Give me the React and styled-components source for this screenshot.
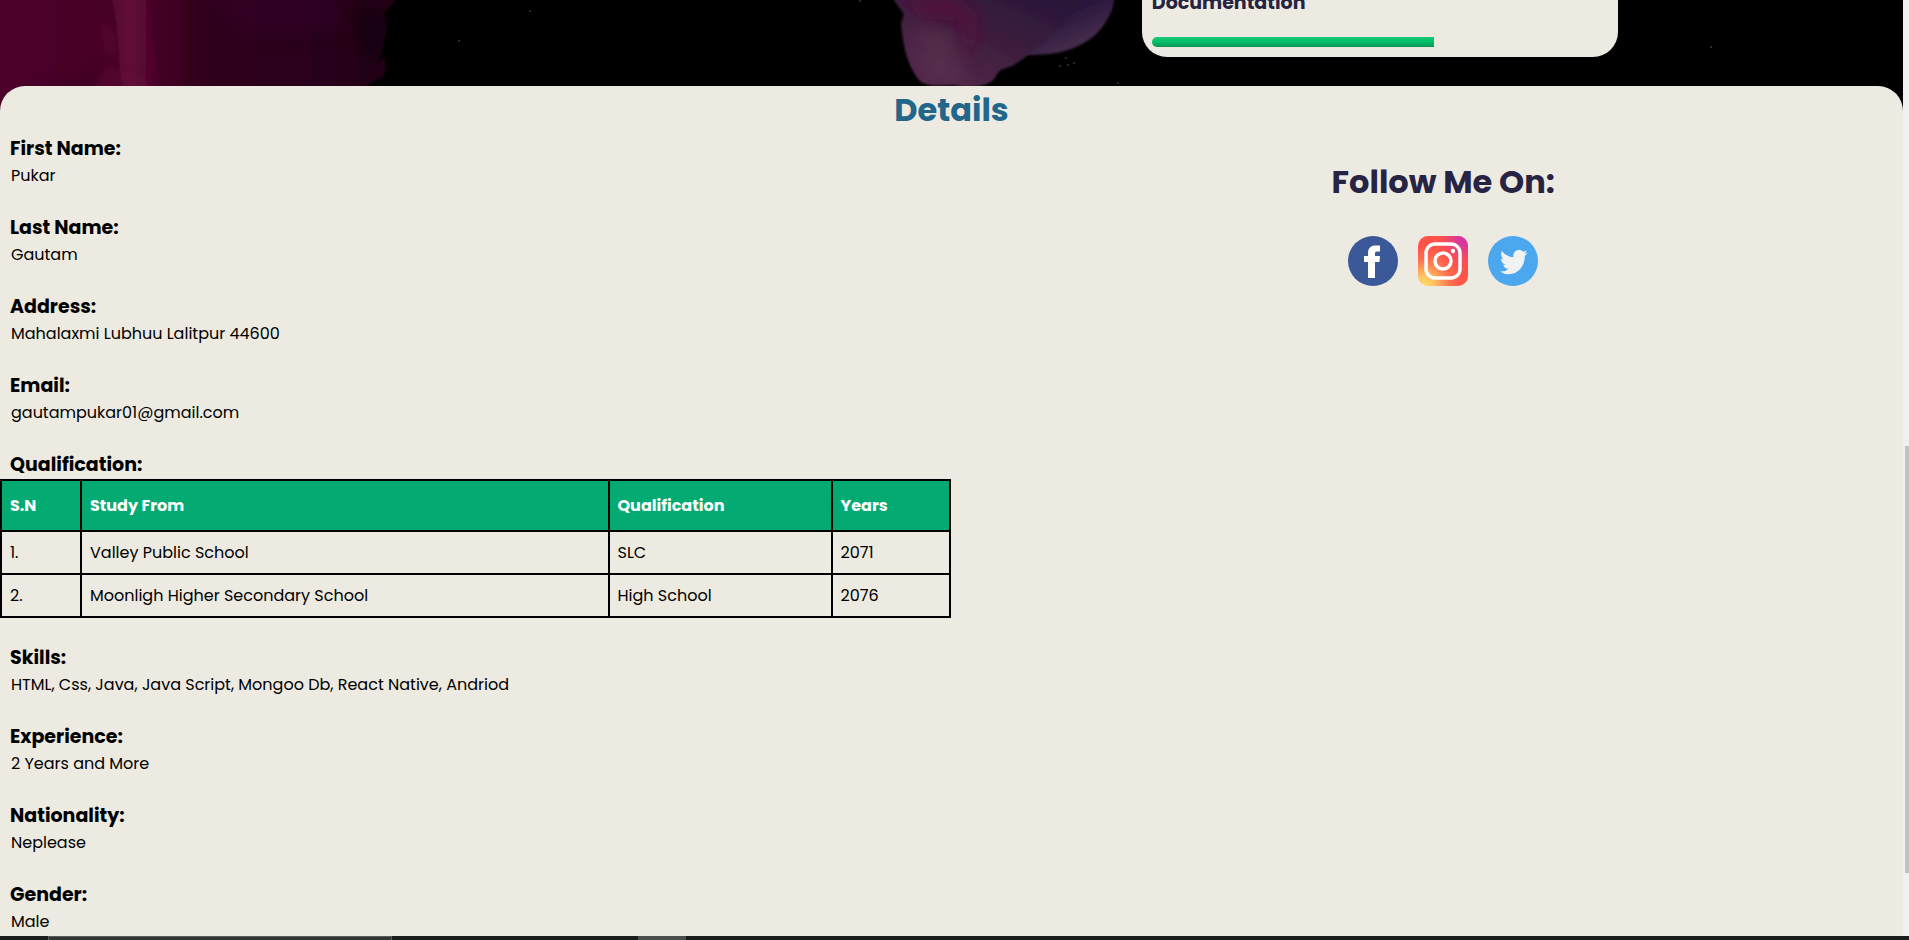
import React from "react";
import styled, { createGlobalStyle } from "styled-components";

const Global = createGlobalStyle`
  * { box-sizing: border-box; margin: 0; padding: 0; }
  html, body, #root { height: 100%; }
  body {
    overflow: hidden;
    background: #000;
    font-family: Poppins, Inter, "Open Sans", sans-serif;
    font-size: 16px;
    line-height: 24px;
    color: #000;
  }
`;

const Screen = styled.div`
  display: flex;
  flex-direction: column;
  height: 100vh;
`;
const Viewport = styled.div`
  display: flex;
  flex: 1;
  min-height: 0;
`;
const Page = styled.main`
  position: relative;
  flex: 1;
  min-width: 0;
  overflow: hidden;
  background: #000;
`;
const Nebula = styled.svg`
  position: absolute;
  top: 0;
  left: 0;
  width: 100%;
  height: 116px;
`;
const Hero = styled.section`
  position: relative;
  display: flex;
  justify-content: flex-end;
  height: 86px;
`;
const SkillCard = styled.article`
  display: flex;
  flex-direction: column;
  justify-content: flex-end;
  gap: 20px;
  width: 25%;
  height: 57px;
  margin-right: 15%;
  padding: 10px;
  border-radius: 0 0 25px 25px;
  background: #edeae1;
`;
const SkillName = styled.h3`
  font-size: 19px;
  line-height: 28px;
  font-weight: 700;
  color: #272343;
`;
const Meter = styled.div`
  height: 10px;
  flex-shrink: 0;
  border-radius: 5px;
  overflow: hidden;
`;
const MeterFill = styled.div`
  width: ${(p) => p.$value}%;
  height: 100%;
  background: linear-gradient(#1cc877, #02c068 45%, #04a35a 85%, #118a52);
`;
const Panel = styled.section`
  position: relative;
  min-height: 100%;
  border-radius: 25px 25px 0 0;
  background: #edeae1;
`;
const Title = styled.h1`
  font-size: 32px;
  line-height: 48px;
  font-weight: 700;
  text-align: center;
  color: ${(p) => p.$color};
`;
const Columns = styled.div`
  display: grid;
  grid-template-columns: 1fr 1fr;
`;
const Details = styled.div`
  display: flex;
  flex-direction: column;
  gap: 24px;
  padding-right: 1px;
`;
const Label = styled.h3`
  padding: 1px 0 0 10px;
  font-size: 19px;
  line-height: 28px;
  font-weight: 700;
`;
const Value = styled.p`
  padding-left: 11px;
  line-height: 26px;
`;
const Table = styled.table`
  width: 100%;
  margin-bottom: 1px;
  border-collapse: collapse;
  table-layout: fixed;
`;
const Col = styled.col`
  width: ${(p) => p.$width};
`;
const Cell = styled.td`
  height: 43px;
  padding: 0 8px;
  border: 2px solid #000;
  text-align: left;
`;
const HeadCell = styled(Cell)`
  height: 51px;
  background: #03aa71;
  color: #fff;
  font-weight: 700;
`;
const Follow = styled.aside`
  display: flex;
  flex-direction: column;
  align-items: center;
  gap: 30px;
  padding: 24px 0 0 32px;
`;
const SocialLinks = styled.nav`
  display: flex;
  gap: 20px;
`;
const SocialLink = styled.a`
  display: block;
  width: 50px;
  height: 50px;
  svg { display: block; width: 100%; height: 100%; }
`;
const ScrollTrack = styled.div`
  display: flex;
  flex-direction: column;
  width: 6px;
  padding-left: 2px;
  background: #f1f1f1;
`;
const ScrollSpace = styled.div`
  flex: ${(p) => p.$size};
`;
const ScrollThumb = styled.div`
  flex: 427;
  background: #c1c1c1;
`;
const Taskbar = styled.footer`
  display: flex;
  height: 4px;
  padding-left: 48px;
  background: #1a1e19;
`;
const TaskSearch = styled.div`
  width: 344px;
  border: 1px solid #5a5c5a;
  border-bottom: 0;
  background: #323531;
`;
const TaskActive = styled.div`
  width: 48px;
  margin-left: 246px;
  background: #4b4e4a;
`;

const stars = [
  [530, 11], [459, 41], [449, 88], [455, 103], [592, 88], [860, 1],
  [1068, 65], [1066, 58], [1074, 63], [1060, 66], [1118, 83], [1711, 47],
];

function Background() {
  return (
    <Nebula viewBox="0 0 1903 116" preserveAspectRatio="xMidYMin slice" aria-hidden="true">
      <defs>
        <linearGradient id="cloud" x1="0" x2="1">
          <stop offset="0" stopColor="#4f002b" />
          <stop offset=".28" stopColor="#460027" />
          <stop offset=".36" stopColor="#4a0029" />
          <stop offset=".52" stopColor="#30001b" />
          <stop offset=".75" stopColor="#2a001c" />
          <stop offset="1" stopColor="#210016" />
        </linearGradient>
        <linearGradient id="ridge" x1="0" x2="1">
          <stop offset="0" stopColor="#5a0c34" stopOpacity=".7" />
          <stop offset=".35" stopColor="#62103a" />
          <stop offset="1" stopColor="#480026" stopOpacity="0" />
        </linearGradient>
        <linearGradient id="plume" x1="0" x2="1" y1="1" y2="0">
          <stop offset="0" stopColor="#5b2c50" />
          <stop offset=".45" stopColor="#41203f" />
          <stop offset="1" stopColor="#241438" />
        </linearGradient>
        <linearGradient id="wing" x1=".2" x2=".9" y1="0" y2=".8">
          <stop offset="0" stopColor="#2b1537" />
          <stop offset=".5" stopColor="#2c193e" />
          <stop offset="1" stopColor="#4b3150" />
        </linearGradient>
        <filter id="soft" x="-50%" y="-50%" width="200%" height="200%"><feGaussianBlur stdDeviation="8" /></filter>
        <filter id="edge"><feGaussianBlur stdDeviation="1" /></filter>
        <filter id="haze" x="-50%" y="-50%" width="200%" height="200%"><feGaussianBlur stdDeviation="4" /></filter>
      </defs>
      <path filter="url(#edge)" fill="url(#cloud)" d="M-5-5H398L392 5 385 12 386 32 381 55 377 66 384 56 386 68 383 77 374 81 364 88 358 120H-5Z" />
      <path filter="url(#haze)" fill="#08000a" opacity=".55" d="M354 14 376 10 390 20 384 48 374 60 360 46Z" />
      <path filter="url(#soft)" fill="#36002c" opacity=".5" d="M200-10H340V30L240 35Z" />
      <path filter="url(#soft)" fill="#310022" opacity=".5" d="M35 88 105 70 82 112H20Z" />
      <path filter="url(#edge)" fill="url(#ridge)" d="M110-5H148C152 40 156 70 172 120H130C122 100 120 70 118 46 117 25 115 10 110-5Z" />
      <path filter="url(#haze)" fill="#641039" opacity=".45" d="M100 15 116 35V62L104 50ZM85 100 108 66 140 74 165 100Z" />
      <path filter="url(#edge)" fill="url(#wing)" d="M1000-5H1115C1113 20 1096 37 1082 44 1066 53 1048 55 1025 55L990 40Z" />
      <path filter="url(#edge)" fill="url(#plume)" d="M890-5 904 14 901 23C903 48 908 66 919 80 924 86 938 86 954 85 965 88 980 88 991 82 997 78 996 73 1001 70 1014 66 1022 60 1028 55 1046 42 1066 22 1085-5Z" />
      <path filter="url(#soft)" fill="#58113d" opacity=".7" d="M903-5H955L978 15 974 55 963 45 958 20 920 18Z" />
      <path filter="url(#soft)" fill="#603953" opacity=".45" d="M912 28 950 30 965 80H928Z" />
      {stars.map(([x, y]) => (
        <circle key={x + "-" + y} cx={x} cy={y} r="1" fill="#343434" />
      ))}
    </Nebula>
  );
}

const Facebook = () => (
  <svg viewBox="0 0 50 50" aria-hidden="true">
    <circle cx="25" cy="25" r="25" fill="#3b5998" />
    <path fill="#fff" d="M20 42V26h-4v-6h4v-3c0-5 3-7.500 7.500-7.500H32v6h-3c-1.600 0-2 .7-2 2V20h5l-.6 6H27v16Z" />
  </svg>
);
const Instagram = () => (
  <svg viewBox="0 0 50 50" aria-hidden="true">
    <defs>
      <radialGradient id="igWarm" cx=".12" cy="1" r=".8">
        <stop offset="0" stopColor="#ffdd64" />
        <stop offset=".25" stopColor="#ffc45f" />
        <stop offset=".65" stopColor="#ff704f" />
        <stop offset="1" stopColor="#ff5348" />
      </radialGradient>
      <radialGradient id="igPink" cx="1" cy="0" r=".75">
        <stop offset="0" stopColor="#c837ab" />
        <stop offset=".25" stopColor="#d935a0" />
        <stop offset="1" stopColor="#ff5348" stopOpacity="0" />
      </radialGradient>
    </defs>
    <rect width="50" height="50" rx="10" fill="url(#igWarm)" />
    <rect width="50" height="50" rx="10" fill="url(#igPink)" />
    <g fill="none" stroke="#fff" strokeWidth="3.500">
      <rect x="8" y="8" width="34" height="34" rx="9" />
      <circle cx="25" cy="25" r="8" />
    </g>
    <circle cx="35" cy="15" r="2.200" fill="#fff" />
  </svg>
);
const Twitter = () => (
  <svg viewBox="0 0 50 50" aria-hidden="true">
    <circle cx="25" cy="25" r="25" fill="#4ba7ee" />
    <path fill="#f1f3f3" transform="translate(12 11) scale(1.150 1.250)" d="M23.953 4.570a10 10 0 0 1-2.825.775 4.958 4.958 0 0 0 2.163-2.723c-.951.555-2.005.959-3.127 1.184a4.920 4.920 0 0 0-8.384 4.482C7.690 8.095 4.067 6.130 1.640 3.162a4.822 4.822 0 0 0-.666 2.475c0 1.710.87 3.213 2.188 4.096a4.904 4.904 0 0 1-2.228-.616v.06a4.923 4.923 0 0 0 3.946 4.827 4.996 4.996 0 0 1-2.212.085 4.936 4.936 0 0 0 4.604 3.417 9.867 9.867 0 0 1-6.102 2.105c-.39 0-.779-.023-1.170-.067a13.995 13.995 0 0 0 7.557 2.209c9.053 0 13.998-7.496 13.998-13.985 0-.21 0-.42-.015-.63A9.935 9.935 0 0 0 24 4.590z" />
  </svg>
);

const socials = [
  ["Facebook", Facebook],
  ["Instagram", Instagram],
  ["Twitter", Twitter],
];
const personal = [
  ["First Name:", "Pukar"],
  ["Last Name:", "Gautam"],
  ["Address:", "Mahalaxmi Lubhuu Lalitpur 44600"],
  ["Email:", "gautampukar01@gmail.com"],
];
const background = [
  ["Skills:", "HTML, Css, Java, Java Script, Mongoo Db, React Native, Andriod"],
  ["Experience:", "2 Years and More"],
  ["Nationality:", "Neplease"],
  ["Gender:", "Male"],
];
const columns = [
  ["S.N", "80px"],
  ["Study From", "auto"],
  ["Qualification", "223px"],
  ["Years", "118px"],
];
const studies = [
  ["1.", "Valley Public School", "SLC", "2071"],
  ["2.", "Moonligh Higher Secondary School", "High School", "2076"],
];

const Field = ({ label, value }) => (
  <div>
    <Label>{label}</Label>
    <Value>{value}</Value>
  </div>
);

export default function App() {
  return (
    <Screen>
      <Global />
      <Viewport>
        <Page>
          <Background />
          <Hero>
            <SkillCard>
              <SkillName>Documentation</SkillName>
              <Meter role="progressbar" aria-label="Documentation" aria-valuenow={62}>
                <MeterFill $value={62} />
              </Meter>
            </SkillCard>
          </Hero>
          <Panel>
            <Title $color="#22668a">Details</Title>
            <Columns>
              <Details>
                {personal.map(([l, v]) => <Field key={l} label={l} value={v} />)}
                <div>
                  <Label id="qualification">Qualification:</Label>
                  <Table aria-labelledby="qualification">
                    <colgroup>
                      {columns.map(([name, w]) => <Col key={name} $width={w} />)}
                    </colgroup>
                    <thead>
                      <tr>
                        {columns.map(([name]) => <HeadCell as="th" scope="col" key={name}>{name}</HeadCell>)}
                      </tr>
                    </thead>
                    <tbody>
                      {studies.map((row) => (
                        <tr key={row[0]}>
                          {row.map((text) => <Cell key={text}>{text}</Cell>)}
                        </tr>
                      ))}
                    </tbody>
                  </Table>
                </div>
                {background.map(([l, v]) => <Field key={l} label={l} value={v} />)}
              </Details>
              <Follow>
                <Title as="h2" $color="#272343">Follow Me On:</Title>
                <SocialLinks aria-label="Social media">
                  {socials.map(([name, Icon]) => (
                    <SocialLink key={name} href={"#" + name.toLowerCase()} aria-label={name}>
                      <Icon />
                    </SocialLink>
                  ))}
                </SocialLinks>
              </Follow>
            </Columns>
          </Panel>
        </Page>
        <ScrollTrack aria-hidden="true">
          <ScrollSpace $size={446} />
          <ScrollThumb />
          <ScrollSpace $size={63} />
        </ScrollTrack>
      </Viewport>
      <Taskbar aria-hidden="true">
        <TaskSearch />
        <TaskActive />
      </Taskbar>
    </Screen>
  );
}
